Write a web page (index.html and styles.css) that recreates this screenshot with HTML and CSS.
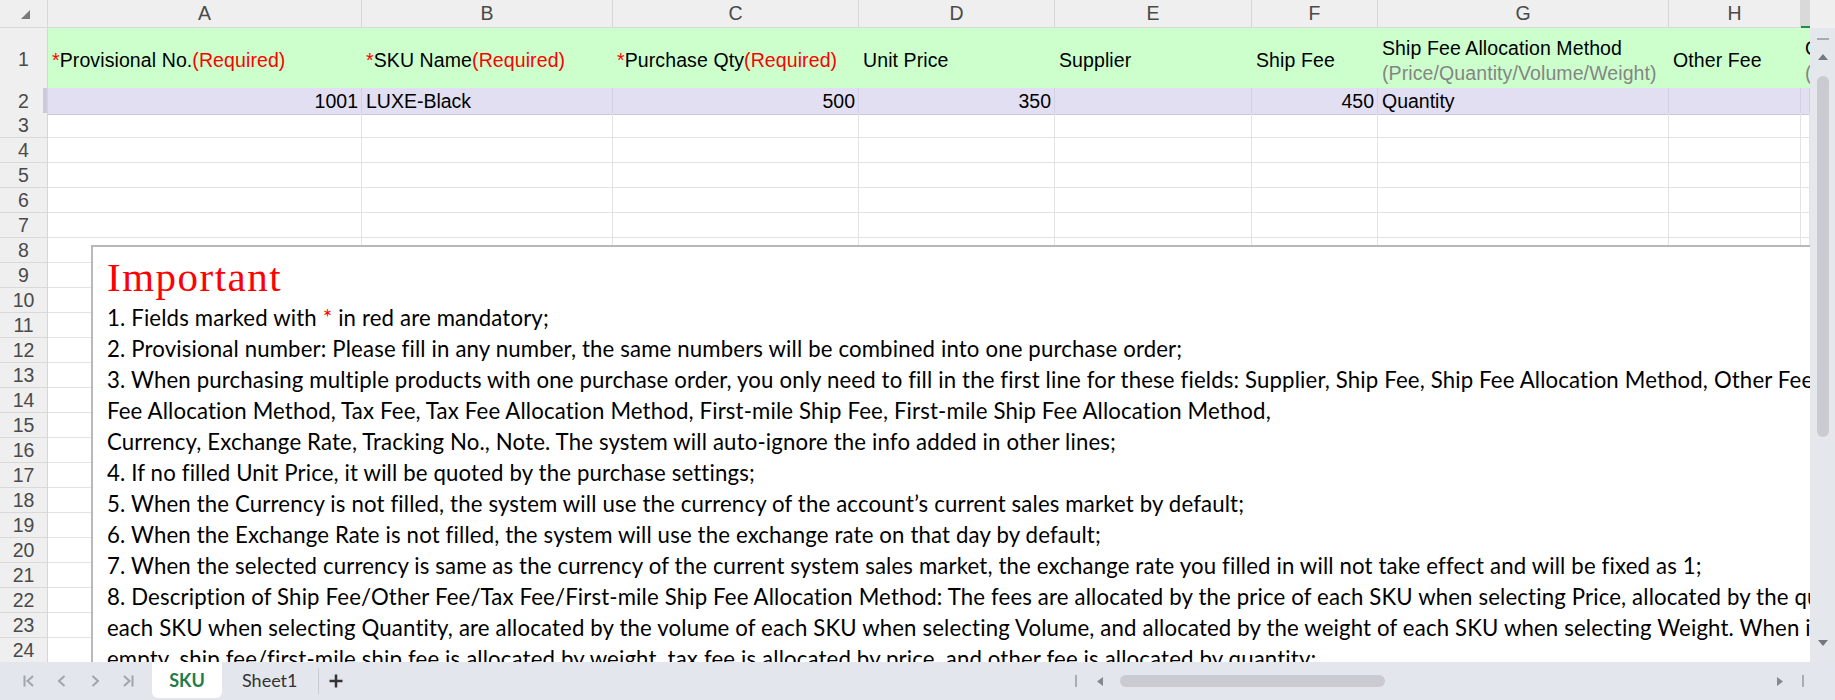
FILE: index.html
```html
<!doctype html>
<html lang="en">
<head>
    <meta charset="UTF-8">
    <title>SKU</title>
    <link rel="stylesheet" href="styles.css">
</head>
<body>
    <div class="sheet">
        <!-- column letters -->
        <div class="colhead">
            <div class="corner">
                <svg width="9" height="9" viewBox="0 0 9 9"><polygon points="9,0 9,9 0,9" fill="#7a7a7a"/></svg>
            </div>
            <div>A</div>
            <div>B</div>
            <div>C</div>
            <div>D</div>
            <div>E</div>
            <div>F</div>
            <div>G</div>
            <div>H</div>
            <div class="ch-sel"></div>
            <div class="ch-fill"></div>
        </div>

        <div class="main">
            <div class="grid">
                <div class="row r1">
                    <div class="rh">1</div>
                    <div class="c"><span><i>*</i>Provisional No.<i>(Required)</i></span></div>
                    <div class="c"><span><i>*</i>SKU Name<i>(Required)</i></span></div>
                    <div class="c"><span><i>*</i>Purchase Qty<i>(Required)</i></span></div>
                    <div class="c"><span>Unit Price</span></div>
                    <div class="c"><span>Supplier</span></div>
                    <div class="c"><span>Ship Fee</span></div>
                    <div class="c"><span>Ship Fee Allocation Method</span><span class="hint">(Price/Quantity/Volume/Weight)</span></div>
                    <div class="c"><span>Other Fee</span></div>
                    <div class="c"><span>Other Fee Allocation Method</span><span class="hint">(Price/Quantity/Volume/Weight)</span></div>
                </div>
                <div class="row r2">
                    <div class="rh">2</div>
                    <div class="c num">1001</div>
                    <div class="c">LUXE-Black</div>
                    <div class="c num">500</div>
                    <div class="c num">350</div>
                    <div class="c"></div>
                    <div class="c num">450</div>
                    <div class="c">Quantity</div>
                    <div class="c"></div>
                    <div class="c"></div>
                </div>
                <div class="blank">
                    <div class="rh-col">
                        <div>3</div><div>4</div><div>5</div><div>6</div><div>7</div>
                        <div>8</div><div>9</div><div>10</div><div>11</div><div>12</div>
                        <div>13</div><div>14</div><div>15</div><div>16</div><div>17</div>
                        <div>18</div><div>19</div><div>20</div><div>21</div><div>22</div>
                        <div>23</div><div>24</div>
                    </div>
                    <div></div><div></div><div></div><div></div>
                    <div></div><div></div><div></div><div></div><div></div>
                </div>

                <!-- text box floating over the sheet -->
                <div class="notes">
                    <div class="notes-title">Important</div>
                    <div class="notes-body">
                        <p>1. Fields marked with <i>*</i> in red are mandatory;</p>
                        <p>2. Provisional number: Please fill in any number, the same numbers will be combined into one purchase order;</p>
                        <p>3. When purchasing multiple products with one purchase order, you only need to fill in the first line for these fields: Supplier, Ship Fee, Ship Fee Allocation Method, Other Fee, Other</p>
                        <p>Fee Allocation Method, Tax Fee, Tax Fee Allocation Method, First-mile Ship Fee, First-mile Ship Fee Allocation Method,</p>
                        <p>Currency, Exchange Rate, Tracking No., Note. The system will auto-ignore the info added in other lines;</p>
                        <p>4. If no filled Unit Price, it will be quoted by the purchase settings;</p>
                        <p>5. When the Currency is not filled, the system will use the currency of the account’s current sales market by default;</p>
                        <p>6. When the Exchange Rate is not filled, the system will use the exchange rate on that day by default;</p>
                        <p>7. When the selected currency is same as the currency of the current system sales market, the exchange rate you filled in will not take effect and will be fixed as 1;</p>
                        <p>8. Description of Ship Fee/Other Fee/Tax Fee/First-mile Ship Fee Allocation Method: The fees are allocated by the price of each SKU when selecting Price, allocated by the quantity of</p>
                        <p>each SKU when selecting Quantity, are allocated by the volume of each SKU when selecting Volume, and allocated by the weight of each SKU when selecting Weight. When it is</p>
                        <p>empty, ship fee/first-mile ship fee is allocated by weight, tax fee is allocated by price, and other fee is allocated by quantity;</p>
                    </div>
                </div>
            </div>

            <div class="vscroll">
                <span class="vs-dash"></span>
                <svg class="vs-up" width="10" height="6" viewBox="0 0 10 6"><polygon points="5,0 10,6 0,6" fill="#75787d"/></svg>
                <span class="vs-thumb"></span>
                <svg class="vs-down" width="10" height="6" viewBox="0 0 10 6"><polygon points="0,0 10,0 5,6" fill="#75787d"/></svg>
            </div>
        </div>
    </div>

    <div class="tabbar">
        <div class="sheets">
            <div class="nav">
                <svg width="14" height="14" viewBox="0 0 14 14"><path d="M2.5 1.5v11M11 2L5.5 7l5.5 5"/></svg>
                <svg width="14" height="14" viewBox="0 0 14 14"><path d="M9.5 2L4 7l5.5 5"/></svg>
                <svg width="14" height="14" viewBox="0 0 14 14"><path d="M4.5 2L10 7l-5.5 5"/></svg>
                <svg width="14" height="14" viewBox="0 0 14 14"><path d="M3 2l5.5 5L3 12M11.5 1.5v11"/></svg>
            </div>
            <div class="tab tab-on">SKU</div>
            <div class="tab">Sheet1</div>
            <span class="sep"></span>
            <svg class="add" width="14" height="14" viewBox="0 0 14 14"><path d="M7 0.5v13M0.5 7h13"/></svg>
        </div>
        <div class="hscroll">
            <span class="hs-bar"></span>
            <svg class="hs-left" width="6" height="9" viewBox="0 0 6 9"><polygon points="6,0 6,9 0,4.5" fill="#85888d"/></svg>
            <span class="hs-thumb"></span>
            <svg class="hs-right" width="6" height="9" viewBox="0 0 6 9"><polygon points="0,0 6,4.5 0,9" fill="#85888d"/></svg>
            <span class="hs-bar hs-end"></span>
        </div>
    </div>
</body>
</html>
```

FILE: styles.css
```css
* {margin:0; padding:0; box-sizing:border-box;}
:root {
    --cols: 48px 314px 251px 246px 196px 197px 126px 291px 132px 1fr;
}
body {
    width: 1835px; height: 700px; overflow: hidden;
    font-family: "Liberation Sans", Arial, sans-serif;
    font-size: 19.5px; color: #000; background: #fff;
}
i {font-style: normal; color: #ff0000;}

.sheet {height: 662px; display: flex; flex-direction: column;}

/* column letters */
.colhead {
    display: grid;
    grid-template-columns: 48px 314px 251px 246px 196px 197px 126px 291px 132px 9px 1fr;
    height: 28px;
    background: #efefef;
}
.colhead > div {
    border-right: 1px solid #d8d8d8;
    border-bottom: 1px solid #d8d8d8;
    text-align: center;
    line-height: 27px;
    color: #4a4a4a;
}
.colhead .corner {
    display: flex; justify-content: center; align-items: flex-start;
    padding: 10px 0 0 3px;
}
.colhead .ch-sel {background: #d9d9d9; border-bottom: 2px solid #1e8a4c; border-right: none;}
.colhead .ch-fill {border: none;}

.main {flex: 1; display: flex; min-height: 0;}
.grid {flex: 1; position: relative; overflow: hidden;}

.row {display: grid; grid-template-columns: var(--cols);}
.rh {
    background: #efefef;
    border-right: 1px solid #d6d6d6;
    border-bottom: 1px solid #d9d9d9;
    text-align: center;
    color: #4a4a4a;
}
.c {white-space: nowrap; overflow: hidden; padding: 0 4px;}

.r1 {height: 60px;}
.r1 .rh {line-height: 62px;}
.r1 .c {
    background: #ccffcc;
    display: flex; flex-direction: column; justify-content: center;
    line-height: 25px;
    padding-top: 2px;
    letter-spacing: 0.1px;
}
.r1 .hint {color: #858585;}

.r2 {height: 25px;}
.r2 .rh {line-height: 26px; box-shadow: inset -4px 0 #cbcadb; border-bottom-color: #cfcfd8;}
.r2 .c {
    background: #e1dff1;
    border-right: 1px solid #d3d1e3;
    border-bottom: 1px solid #c9c7d9;
    line-height: 27px;
}
.r2 .c.num {text-align: right; padding-right: 3px;}

.blank {
    display: grid; grid-template-columns: var(--cols);
    height: 550px;
    background: repeating-linear-gradient(#fff 0 24px, #e3e3e3 24px 25px);
}
.blank > div {border-right: 1px solid #e3e3e3;}
.blank .rh-col {
    background: repeating-linear-gradient(#efefef 0 24px, #d9d9d9 24px 25px);
    border-right-color: #d6d6d6;
    color: #4a4a4a;
    text-align: center;
}
.rh-col div {height: 25px; line-height: 25px;}

/* text box */
.notes {
    position: absolute; left: 91px; top: 217px;
    width: 1800px; height: 480px;
    border: 2px solid #b8b8b8;
    background: #fff;
}
.notes-title {
    height: 53px;
    padding: 7px 0 0 14px;
    font-family: "Liberation Serif", "Times New Roman", serif;
    font-size: 41px; line-height: 46px;
    letter-spacing: 1.5px;
    color: #ff0000;
}
.notes-body {
    margin-top: 2px; padding-left: 14px;
    font-family: Lato, "Open Sans", sans-serif;
    font-size: 22.2px; line-height: 31px;
    letter-spacing: 0.15px;
    white-space: nowrap;
}

/* vertical scrollbar */
.vscroll {
    width: 25px;
    background: #e4e7ec;
    display: flex; flex-direction: column; align-items: center;
    padding-top: 10px;
}
.vs-dash {width: 12px; height: 2px; background: #a7aab0;}
.vs-up {margin-top: 14px;}
.vs-thumb {width: 12px; height: 361px; margin-top: 16px; border-radius: 6px; background: #c9cbd0;}
.vs-down {margin-top: auto; margin-bottom: 16px;}

/* sheet tabs + horizontal scrollbar */
.tabbar {
    height: 38px;
    display: flex;
    background: #e3e6ec;
    font-family: Lato, "Noto Sans", sans-serif;
    font-size: 18px;
}
.sheets {width: 1075px; display: flex; align-items: center;}
.nav {display: flex; align-items: center; gap: 19px; padding-left: 22px;}
.nav svg {fill: none; stroke: #a1a5ab; stroke-width: 2;}
.tab {height: 36px; align-self: flex-start; display: flex; align-items: center; padding: 0 20px; color: #333;}
.tab-on {
    width: 70px; margin-left: 17px; padding: 0;
    justify-content: center;
    background: #fff; border-radius: 0 0 6px 6px;
    color: #1d7d48; font-weight: bold;
}
.sep {width: 1px; height: 26px; background: #c9ccd2;}
.add {margin-left: 10px; fill: none; stroke: #333; stroke-width: 2.5;}

.hscroll {flex: 1; display: flex; align-items: center; padding-right: 31px;}
.hs-bar {width: 2px; height: 12px; background: #a9adb3;}
.hs-left {margin-left: 20px;}
.hs-thumb {width: 265px; height: 12px; margin-left: 17px; border-radius: 6px; background: #c9cbd0;}
.hs-right {margin-left: auto;}
.hs-end {margin-left: 19px;}
```
